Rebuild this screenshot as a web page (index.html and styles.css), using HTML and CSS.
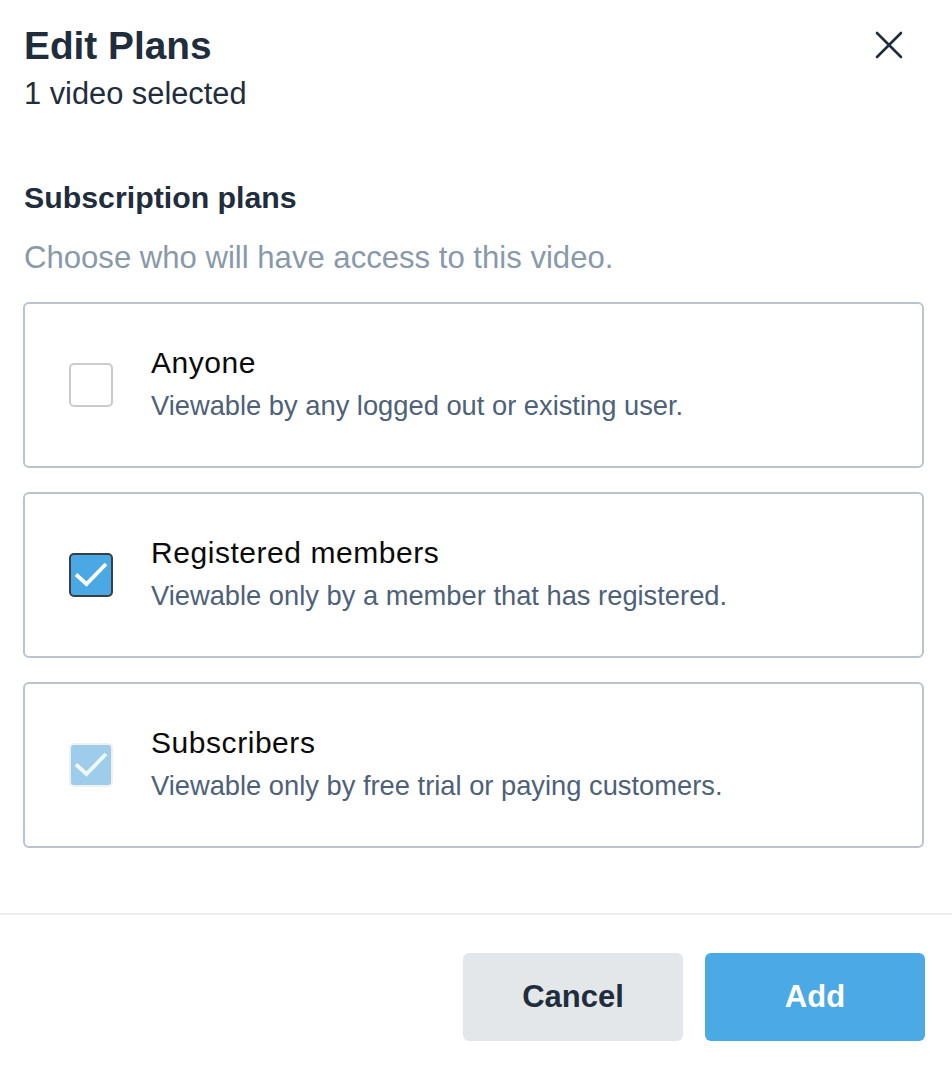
FILE: index.html
```html
<!DOCTYPE html>
<html>
<head>
<meta charset="utf-8">
<link rel="stylesheet" href="styles.css">
</head>
<body>
<div class="modal">
  <header class="head">
    <div class="titles">
      <h1 class="title">Edit Plans</h1>
      <div class="subtitle">1 video selected</div>
    </div>
    <button class="close" aria-label="Close">
      <svg width="28" height="28" viewBox="0 0 28 28"><path d="M2 2 L26 26 M26 2 L2 26" stroke="#1f2d3d" stroke-width="2.6" stroke-linecap="round" fill="none"/></svg>
    </button>
  </header>
  <section class="body">
    <h2 class="section-title">Subscription plans</h2>
    <p class="hint">Choose who will have access to this video.</p>
    <div class="options">
      <label class="option">
        <span class="check"></span>
        <span class="text">
          <span class="opt-title">Anyone</span>
          <span class="opt-desc">Viewable by any logged out or existing user.</span>
        </span>
      </label>
      <label class="option">
        <span class="check checked">
          <svg width="40" height="40" viewBox="0 0 40 40"><path d="M5 19.5 L15.5 29 L35 9" stroke="#fff" stroke-width="3.8" fill="none"/></svg>
        </span>
        <span class="text">
          <span class="opt-title">Registered members</span>
          <span class="opt-desc">Viewable only by a member that has registered.</span>
        </span>
      </label>
      <label class="option">
        <span class="check disabled">
          <svg width="40" height="40" viewBox="0 0 40 40"><path d="M5 19.5 L15.5 29 L35 9" stroke="#fff" stroke-width="3.8" fill="none" opacity="0.85"/></svg>
        </span>
        <span class="text">
          <span class="opt-title">Subscribers</span>
          <span class="opt-desc">Viewable only by free trial or paying customers.</span>
        </span>
      </label>
    </div>
  </section>
  <footer class="foot">
    <button class="btn btn-cancel">Cancel</button>
    <button class="btn btn-add">Add</button>
  </footer>
</div>
</body>
</html>
```

FILE: styles.css
```css
* { box-sizing: border-box; }
html, body { margin: 0; padding: 0; background: #fff; }
body {
  font-family: "Liberation Sans", Arial, sans-serif;
  color: #1f2d3d;
  width: 952px;
  height: 1070px;
  overflow: hidden;
}
.modal { display: flex; flex-direction: column; }
.head {
  display: flex;
  justify-content: space-between;
  align-items: flex-start;
  padding: 24px 28px 0 24px;
}
.title {
  margin: 0;
  font-size: 38.8px;
  line-height: 44px;
  font-weight: 700;
  color: #1f2d3d;
}
.subtitle {
  font-size: 30.8px;
  line-height: 36px;
  margin-top: 8px;
  color: #1f2d3d;
}
.close {
  border: 0;
  background: none;
  padding: 0;
  margin: 7px 21px 0 0;
  width: 28px;
  height: 28px;
  cursor: pointer;
}
.body { padding: 0 28px 0 23px; }
.section-title {
  margin: 68px 0 0 1px;
  font-size: 30.3px;
  line-height: 36px;
  font-weight: 700;
  color: #1f2d3d;
}
.hint {
  margin: 24px 0 0 1px;
  font-size: 31.1px;
  line-height: 36px;
  color: #8a99aa;
}
.options {
  display: flex;
  flex-direction: column;
  gap: 24px;
  margin-top: 26px;
}
.option {
  display: flex;
  align-items: center;
  height: 166px;
  border: 2px solid #b9c4cd;
  border-radius: 6px;
  padding-left: 44px;
}
.check {
  width: 44px;
  height: 44px;
  flex: none;
  border: 2px solid #cbcbcb;
  border-radius: 5px;
  display: flex;
  align-items: center;
  justify-content: center;
  background: #fff;
  overflow: hidden;
}
.check svg { display: block; flex: none; }
.check.checked {
  background: #4aa8e5;
  border-color: #3a3f45;
}
.check.disabled {
  background: #9ecdec;
  border-color: #eef0f2;
}
.text {
  display: flex;
  flex-direction: column;
  margin-left: 38px;
  margin-bottom: 4px;
}
.opt-title {
  font-size: 30px;
  line-height: 36px;
  letter-spacing: 0.55px;
  color: #0b0b0b;
}
.opt-desc {
  font-size: 27.3px;
  line-height: 32px;
  margin-top: 9px;
  color: #4e6178;
}
.foot {
  margin-top: 65px;
  border-top: 2px solid #eeeff0;
  display: flex;
  justify-content: flex-end;
  gap: 22px;
  padding: 38px 27px 0 0;
}
.btn {
  width: 220px;
  height: 88px;
  border: 0;
  border-radius: 6px;
  font-family: "Liberation Sans", Arial, sans-serif;
  font-size: 31px;
  font-weight: 700;
  cursor: pointer;
}
.btn-cancel { background: #e3e7e9; color: #1f2d3d; }
.btn-add { background: #4ba9e6; color: #fff; }
```
